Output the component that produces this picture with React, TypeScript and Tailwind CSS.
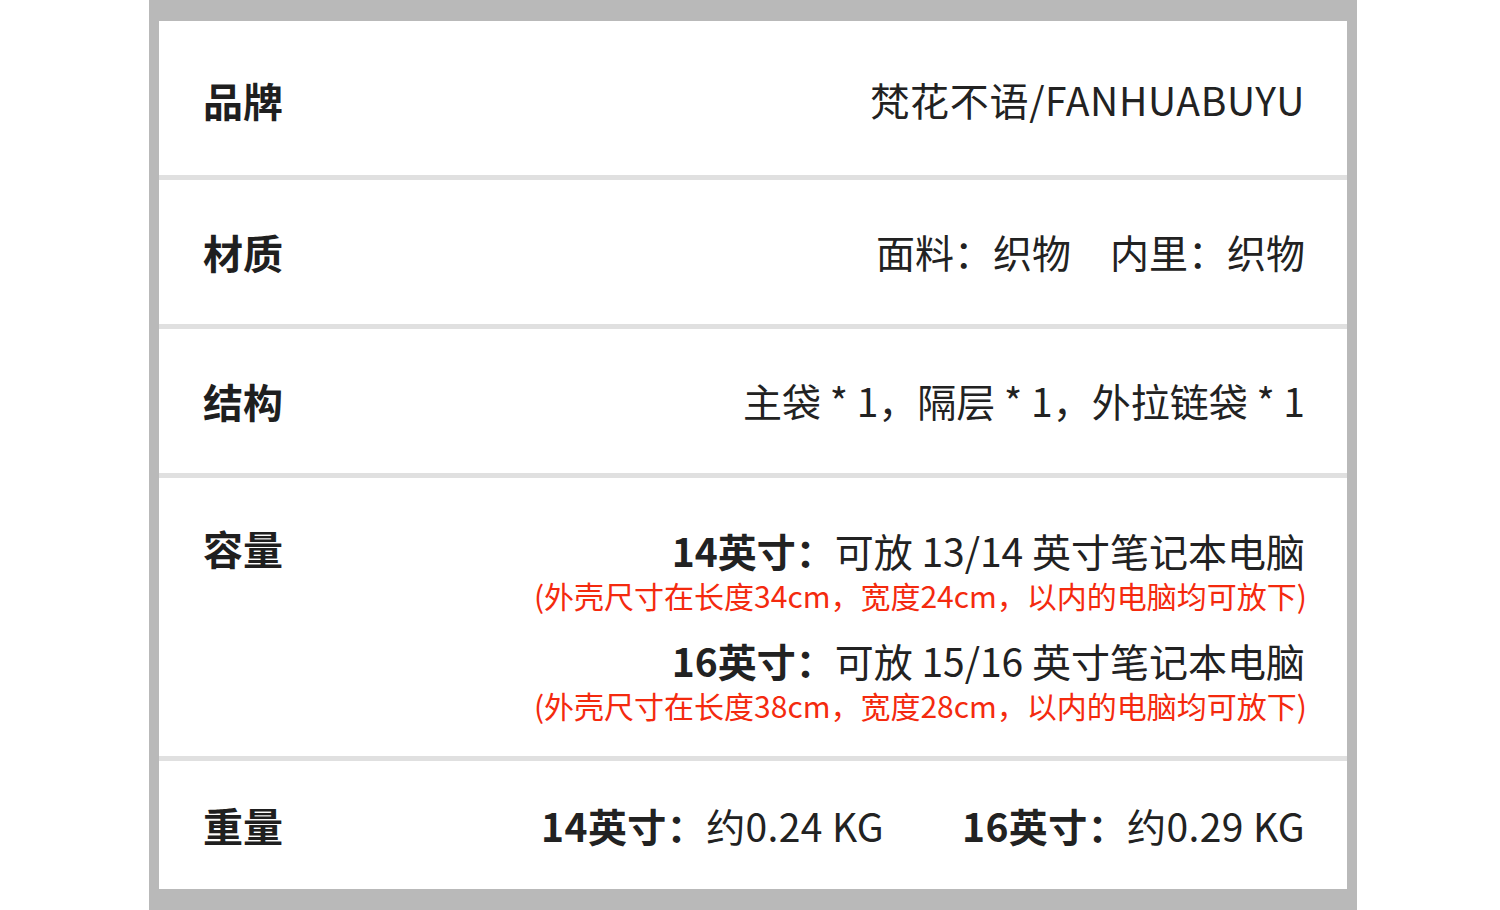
const font = { fontFamily: '"Noto Sans CJK SC", "Noto Sans", sans-serif' };

function Row({
  label,
  className,
  children,
}: {
  label: string;
  className: string;
  children: React.ReactNode;
}) {
  return (
    <div className={`flex justify-between pl-[44px] pr-[42px] ${className}`}>
      <div className="text-[40px] font-bold leading-none text-[#1f1f1f]">{label}</div>
      <div className="text-right text-[#222222]">{children}</div>
    </div>
  );
}

export default function App() {
  return (
    <div className="w-[1500px] h-[910px] bg-white" style={font}>
      <div className="ml-[149px] w-[1208px] bg-[#b9b9b9] px-[10px] py-[21px]">
        <div className="flex flex-col bg-white">
          {/* 品牌 */}
          <Row label="品牌" className="h-[159px] items-center pt-1 border-b-[5px] border-[#e0e0e0]">
            <span className="text-[39px] leading-none tracking-[0.7px]">梵花不语/FANHUABUYU</span>
          </Row>

          {/* 材质 */}
          <Row label="材质" className="h-[149px] items-center border-b-[5px] border-[#e0e0e0]">
            <span className="text-[39px] leading-none">面料：织物　内里：织物</span>
          </Row>

          {/* 结构 */}
          <Row label="结构" className="h-[149px] items-center border-b-[5px] border-[#e0e0e0]">
            <span className="text-[39px] leading-none">主袋 * 1，隔层 * 1，外拉链袋 * 1</span>
          </Row>

          {/* 容量 */}
          <Row label="容量" className="h-[283px] items-start pt-[50px] border-b-[5px] border-[#e0e0e0]">
            <div className="text-[39px] leading-[45px]">
              <span className="font-bold">14英寸：</span>可放 13/14 英寸笔记本电脑
            </div>
            <div className="-mr-[2px] text-[30px] leading-[45px] text-[#f42a0e]">
              (外壳尺寸在长度34cm，宽度24cm，以内的电脑均可放下)
            </div>
            <div className="mt-[20px] text-[39px] leading-[45px]">
              <span className="font-bold">16英寸：</span>可放 15/16 英寸笔记本电脑
            </div>
            <div className="-mr-[2px] text-[30px] leading-[45px] text-[#f42a0e]">
              (外壳尺寸在长度38cm，宽度28cm，以内的电脑均可放下)
            </div>
          </Row>

          {/* 重量 */}
          <Row label="重量" className="h-[128px] items-center">
            <div className="flex gap-[78px] text-[39px] leading-none tracking-[0.4px]">
              <span>
                <span className="font-bold">14英寸：</span>约0.24 KG
              </span>
              <span>
                <span className="font-bold">16英寸：</span>约0.29 KG
              </span>
            </div>
          </Row>
        </div>
      </div>
    </div>
  );
}
